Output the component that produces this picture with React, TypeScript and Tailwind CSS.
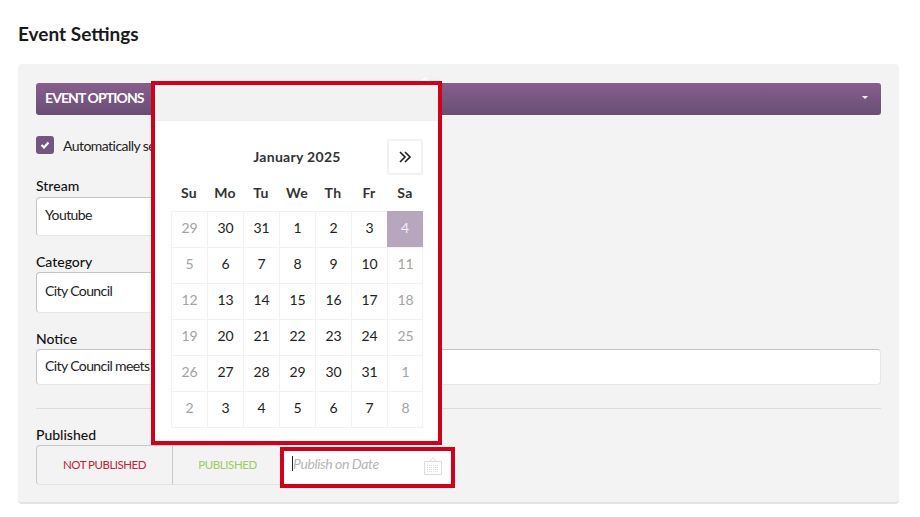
const weeks = [
  [29, 30, 31, 1, 2, 3, 4],
  [5, 6, 7, 8, 9, 10, 11],
  [12, 13, 14, 15, 16, 17, 18],
  [19, 20, 21, 22, 23, 24, 25],
  [26, 27, 28, 29, 30, 31, 1],
  [2, 3, 4, 5, 6, 7, 8],
]
const days = ["Su", "Mo", "Tu", "We", "Th", "Fr", "Sa"]

const Field = ({ label, value, className, inputClass }: { label: string; value: string; className: string; inputClass: string }) => (
  <div className={className}>
    <label className="block pb-[2px] text-[14px] leading-[15px] font-medium text-[#111]">{label}</label>
    <div className={`flex items-center rounded-[4px] border border-[#e6e6e6] border-l-[#c4c4c4] border-t-[#c4c4c4] bg-white px-2 pb-[4px] text-[14px] tracking-[-0.6px] text-[#222] whitespace-nowrap ${inputClass}`}>
      {value}
    </div>
  </div>
)

const Calendar = () => (
  <div className="absolute left-[133px] top-[17px] z-10 w-[291px] border-4 border-[#d0021b] bg-white">
    <div className="absolute right-[8px] -top-[8px] h-0 w-0 border-x-[5px] border-b-[4px] border-x-transparent border-b-white" />
    <div className="h-9 bg-[#f2f2f2]" />
    <div className="pl-4 pr-[15px] pt-[18px] pb-[13px]">
      <div className="flex h-9 items-center">
        <div className="w-9" />
        <div className="flex-1 pb-[2px] text-center text-[14px] font-bold tracking-[0.3px] text-[#333]">January 2025</div>
        <div className="flex h-9 w-9 items-center justify-center rounded-[2px] border-2 border-[#f2f2f2]">
          <svg width="14" height="12" viewBox="0 0 14 12" fill="none" stroke="#222" strokeWidth="1.6">
            <path d="M2 1l5 5-5 5M7 1l5 5-5 5" />
          </svg>
        </div>
      </div>
      <div className="grid h-9 grid-cols-[repeat(7,36px)] items-center pb-[2px]">
        {days.map(d => (
          <div key={d} className="text-center text-[14px] font-bold tracking-[0.3px] text-[#333]">{d}</div>
        ))}
      </div>
      <div className="grid grid-cols-[repeat(7,36px)] border-b border-r border-[#f2f2f2]">
        {weeks.flatMap((week, w) =>
          week.map((n, i) => {
            const muted = i === 0 || i === 6
            const selected = w === 0 && i === 6
            return (
              <div
                key={`${w}-${i}`}
                className={
                  selected
                    ? "flex h-9 items-center justify-center bg-[#b8a6bf] pb-[3px] text-[14px] text-[#f3eef5]"
                    : muted
                      ? "flex h-9 items-center justify-center border-l border-t border-[#f2f2f2] pb-[5px] text-[14px] text-[#a3a3a3]"
                      : "flex h-9 items-center justify-center border-l border-t border-[#f2f2f2] pb-[5px] text-[14px] text-[#222]"
                }
              >
                {n}
              </div>
            )
          }),
        )}
      </div>
    </div>
  </div>
)

const App = () => {
  return (
    <div className="h-[517px] w-[920px] overflow-hidden bg-white font-['Lato','Liberation_Sans',sans-serif]">
      <h1 className="pl-[18px] pt-[23px] text-[19px] leading-[22px] font-bold text-[#1a1a1a]">Event Settings</h1>
      <div className="relative mx-[18px] mt-[19px] h-[440px] w-[881px] rounded-[4px] border-b-2 border-[#e3e3e3] bg-[#f3f3f3] px-[18px] pt-[19px]">
        <div className="flex h-8 items-center justify-between rounded-[3px] bg-gradient-to-b from-[#875e8e] to-[#694e74] pl-[9px] pr-[13px]">
          <span className="pb-[3px] text-[14px] font-bold tracking-[-0.9px] text-white">EVENT OPTIONS</span>
          <span className="mb-[3px] h-0 w-0 border-x-[3px] border-t-[3px] border-x-transparent border-t-white" />
        </div>

        <div className="mt-[21px] flex h-[18px] items-center gap-[9px]">
          <span className="flex h-[18px] w-[18px] items-center justify-center rounded-[3px] bg-[#735680]">
            <svg width="10" height="8" viewBox="0 0 10 8" fill="none" stroke="#fff" strokeWidth="2.2">
              <path d="M1.5 4l2.5 2.5L8.5 1.5" />
            </svg>
          </span>
          <span className="text-[14px] tracking-[-0.55px] text-[#222]">Automatically set</span>
        </div>

        <Field label="Stream" value="Youtube" className="mt-[24px] w-[300px]" inputClass="mt-[2px] h-[39px]" />
        <Field label="Category" value="City Council" className="mt-[18px] w-[300px]" inputClass="mt-px h-[41px]" />
        <Field label="Notice" value="City Council meets" className="mt-[18px] w-full" inputClass="mt-px h-[36px]" />

        <div className="mt-[23px] border-t border-[#dcdcdc]" />

        <label className="mt-[18px] block pb-[2px] text-[14px] leading-[15px] font-medium text-[#111]">Published</label>
        <div className="mt-px flex items-start">
          <div className="flex h-10 w-[136px] items-center justify-center rounded-l-[4px] border border-r-0 border-[#c9c9c9] border-b-[#e4e4e4] text-[11.5px] tracking-[-0.5px] text-[#c4203a]">
            NOT PUBLISHED
          </div>
          <div className="flex h-10 w-[108px] items-center justify-center border border-r-0 border-[#c9c9c9] border-b-[#e4e4e4] pl-[2px] text-[11.5px] tracking-[-0.4px] text-[#9ccb5f]">
            PUBLISHED
          </div>
          <div className="mt-[2px] flex h-[41px] w-[175px] items-center justify-between border-4 border-[#d0021b] bg-white pl-2 pr-[9px]">
            <span className="-mt-2 border-l border-[#222] text-[14px] leading-[15px] italic tracking-[-0.4px] text-[#b5b5b5]">Publish on Date</span>
            <svg className="-mt-[3px]" width="18" height="18" viewBox="0 0 18 18" fill="none" stroke="#dcdcdc">
              <path d="M.5 4.5h17v13H.5zM5.5 4.5L9 .8l3.5 3.7" />
              <path strokeDasharray="1 1" d="M3 8.5h12M3 10.5h12M3 12.5h12M3 14.5h12" />
            </svg>
          </div>
        </div>

        <Calendar />
      </div>
    </div>
  )
}

export default App
